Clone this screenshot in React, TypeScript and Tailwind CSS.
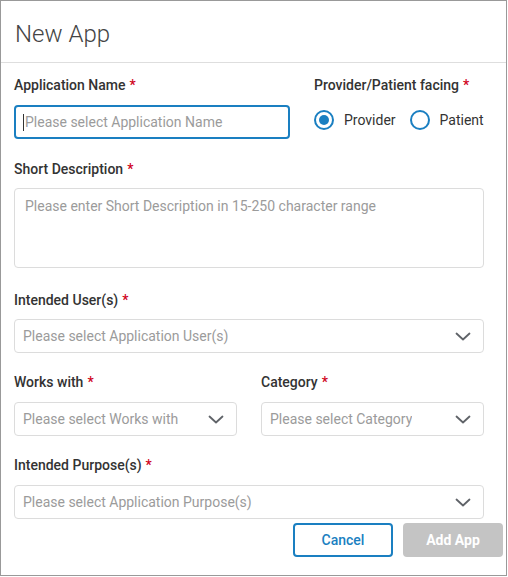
import React from "react";

const Chevron = () => (
  <svg width="16" height="9" viewBox="0 0 16 9" fill="none" className="shrink-0">
    <polyline points="1.5,1.5 8,7.5 14.5,1.5" stroke="#5f6368" strokeWidth="1.8" strokeLinecap="round" strokeLinejoin="round" />
  </svg>
);

const Label = ({ text, className = "" }: { text: string; className?: string }) => (
  <div className={`text-[14px] leading-5 font-medium text-[#333] ${className}`}>
    {text}
    <span className="ml-1 text-[#d0021b]">*</span>
  </div>
);

const Select = ({ placeholder }: { placeholder: string }) => (
  <div className="flex h-[34px] items-center justify-between rounded-[4px] border border-[#dcdcdc] bg-white pl-2 pr-3 text-[14px] text-[#9b9b9b]">
    <span className="truncate">{placeholder}</span>
    <Chevron />
  </div>
);

const Radio = ({ checked, label }: { checked?: boolean; label: string }) => (
  <div className="flex items-center gap-[10px]">
    <span className="flex h-5 w-5 items-center justify-center rounded-full border-2 border-[#1a7fc1]">
      {checked && <span className="h-[10px] w-[10px] rounded-full bg-[#1a7fc1]" />}
    </span>
    <span className="text-[14px] leading-5 text-[#333]">{label}</span>
  </div>
);

export default function App() {
  return (
    <div className="h-[576px] w-[507px] border border-[#999] bg-white font-['Roboto',sans-serif]">
      {/* Header */}
      <div className="h-[62px] border-b border-[#dedede] pl-[14px] pt-[17px]">
        <h1 className="text-[24px] leading-8 font-light text-[#444]">New App</h1>
      </div>

      <div className="pl-[13px] pr-[22px] pt-[12px]">
        <div className="grid grid-cols-[276px_1fr] gap-x-6">
          <div>
            <Label text="Application Name" className="mb-[10px]" />
            <div className="flex h-[34px] items-center rounded-[4px] border-2 border-[#1a7fc1] pl-[7px] text-[14px] text-[#9b9b9b]">
              <span className="mr-px h-[17px] w-px bg-[#333]" />
              <span>Please select Application Name</span>
            </div>
          </div>
          <div>
            <Label text="Provider/Patient facing" className="mb-[10px]" />
            <div className="flex h-[30px] items-center gap-[14px]">
              <Radio checked label="Provider" />
              <Radio label="Patient" />
            </div>
          </div>
        </div>

        <Label text="Short Description" className="mt-5 mb-[9px]" />
        <div className="h-[80px] rounded-[4px] border border-[#dcdcdc] px-[10px] py-[7px] text-[14px] leading-5 text-[#9b9b9b]">
          Please enter Short Description in 15-250 character range
        </div>

        <Label text="Intended User(s)" className="mt-[22px] mb-[9px]" />
        <Select placeholder="Please select Application User(s)" />

        <div className="mt-[19px] grid grid-cols-2 gap-x-6">
          <div>
            <Label text="Works with" className="mb-[10px]" />
            <Select placeholder="Please select Works with" />
          </div>
          <div>
            <Label text="Category" className="mb-[10px]" />
            <Select placeholder="Please select Category" />
          </div>
        </div>

        <Label text="Intended Purpose(s)" className="mt-[19px] mb-[10px]" />
        <Select placeholder="Please select Application Purpose(s)" />
      </div>

      <div className="mt-1 flex justify-end gap-[10px] pr-[3px]">
        <button className="h-[34px] w-[100px] rounded-[4px] border-2 border-[#1a7fc1] bg-white text-[14px] font-medium text-[#1a7fc1]">
          Cancel
        </button>
        <button className="h-[34px] w-[100px] rounded-[4px] bg-[#c4c4c4] text-[14px] font-bold text-white">
          Add App
        </button>
      </div>
    </div>
  );
}
